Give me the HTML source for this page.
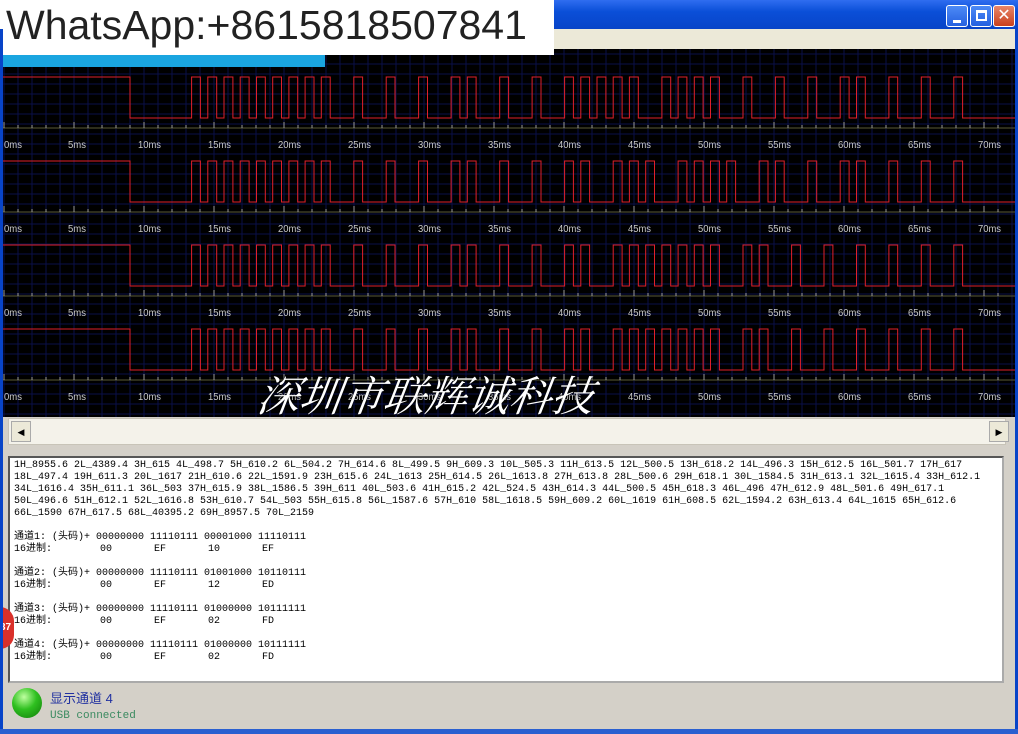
<!DOCTYPE html>
<html><head><meta charset="utf-8"><style>
*{margin:0;padding:0;box-sizing:border-box}
body{width:1018px;height:734px;overflow:hidden;background:#d4d0c8;position:relative;font-family:"Liberation Sans",sans-serif}
.abs{position:absolute}
#title{left:0;top:0;width:1018px;height:29px;background:linear-gradient(#2f6df0,#0a4fd8 40%,#0844c8)}
.btn{top:5px;width:22px;height:22px;border:1px solid #fff;border-radius:3px;background:linear-gradient(#4d8af6,#2561e0)}
#menu{left:0;top:29px;width:1018px;height:20px;background:#ece9d8}
#wave{left:0;top:49px;width:1018px;height:368px;background:#000}
#wa{left:0;top:0;width:554px;height:55px;background:#fff;font-size:41px;color:#222;padding:2px 0 0 6px}
#cyan{left:0;top:55px;width:325px;height:12px;background:#1aa5e0}
#sb{left:8px;top:418px;width:998px;height:27px;background:#f4f2ea;border:1px solid #c8c4b8}
.arr{top:2px;width:20px;height:21px;background:#ece9d8;border:1px solid #aaa;font-size:9px;text-align:center;line-height:20px;color:#000}
#txt{left:8px;top:456px;width:996px;height:227px;background:#fff;border:2px inset #aaa;font-family:"Liberation Mono","Noto Sans CJK SC",monospace;font-size:10px;line-height:12px;color:#000;padding:2px 0 0 4px;white-space:pre}
#ovl{left:258px;top:364px;font-family:"Liberation Serif","Noto Serif CJK SC",serif;font-style:italic;font-size:42px;color:#fff;text-shadow:0 0 2px #000;transform:skewX(-8deg)}
</style></head><body>
<div id="title" class="abs"></div>
<div class="abs btn" style="left:946px"><div class="abs" style="left:6px;top:14px;width:8px;height:3px;background:#fff"></div></div>
<div class="abs btn" style="left:970px"><div class="abs" style="left:5px;top:4px;width:11px;height:11px;border:2px solid #fff;border-top-width:3px"></div></div>
<div class="abs btn" style="left:993px;background:linear-gradient(#e8866a,#c9401c);color:#fff;font-size:16px;text-align:center;line-height:20px">✕</div>
<div id="menu" class="abs"></div>
<div id="wave" class="abs"><svg id="sv" width="1018" height="368"></svg></div>
<div id="wa" class="abs">WhatsApp:+8615818507841</div>
<div id="cyan" class="abs"></div>
<div id="ovl" class="abs">深圳市联辉诚科技</div>
<div id="sb" class="abs"><div class="abs arr" style="left:2px">◀</div><div class="abs arr" style="left:980px">▶</div></div>
<div id="txt" class="abs">1H_8955.6 2L_4389.4 3H_615 4L_498.7 5H_610.2 6L_504.2 7H_614.6 8L_499.5 9H_609.3 10L_505.3 11H_613.5 12L_500.5 13H_618.2 14L_496.3 15H_612.5 16L_501.7 17H_617
18L_497.4 19H_611.3 20L_1617 21H_610.6 22L_1591.9 23H_615.6 24L_1613 25H_614.5 26L_1613.8 27H_613.8 28L_500.6 29H_618.1 30L_1584.5 31H_613.1 32L_1615.4 33H_612.1
34L_1616.4 35H_611.1 36L_503 37H_615.9 38L_1586.5 39H_611 40L_503.6 41H_615.2 42L_524.5 43H_614.3 44L_500.5 45H_618.3 46L_496 47H_612.9 48L_501.6 49H_617.1
50L_496.6 51H_612.1 52L_1616.8 53H_610.7 54L_503 55H_615.8 56L_1587.6 57H_610 58L_1618.5 59H_609.2 60L_1619 61H_608.5 62L_1594.2 63H_613.4 64L_1615 65H_612.6
66L_1590 67H_617.5 68L_40395.2 69H_8957.5 70L_2159

通道1: (头码)+ 00000000 11110111 00001000 11110111
16进制:        00       EF       10       EF

通道2: (头码)+ 00000000 11110111 01001000 10110111
16进制:        00       EF       12       ED

通道3: (头码)+ 00000000 11110111 01000000 10111111
16进制:        00       EF       02       FD

通道4: (头码)+ 00000000 11110111 01000000 10111111
16进制:        00       EF       02       FD</div>
<div class="abs" style="left:0;top:607px;width:14px;height:42px;border-radius:0 21px 21px 0;background:#d9302a;color:#fff;font-size:10px;font-weight:bold;line-height:42px">37</div>
<div class="abs" style="left:12px;top:688px;width:30px;height:30px;border-radius:50%;background:radial-gradient(circle at 40% 30%,#bfffa0,#2fc020 45%,#107a08)"></div>
<div class="abs" style="left:50px;top:688px;font-family:'Liberation Sans','Noto Sans CJK SC',sans-serif;font-size:13px;color:#2030a0">显示通道 4</div>
<div class="abs" style="left:50px;top:710px;font-family:'Liberation Mono',monospace;font-size:11px;color:#3a8a60">USB connected</div>
<div class="abs" style="left:0;top:729px;width:1018px;height:5px;background:#2a5fd0"></div>
<div class="abs" style="left:0;top:29px;width:3px;height:700px;background:#0844c8"></div>
<div class="abs" style="left:1015px;top:29px;width:3px;height:700px;background:#0844c8"></div>
<script>
(function(){
var s='',W=1018;
for(var x=4;x<W;x+=14)s+='<line x1="'+x+'" y1="0" x2="'+x+'" y2="368" stroke="#0a1048" stroke-width="1"/>';
for(var y=5;y<368;y+=10)s+='<line x1="0" y1="'+y+'" x2="'+W+'" y2="'+y+'" stroke="#0a1048" stroke-width="1"/>';
var bits=['00000000111101110000100011110111','00000000111101110100100010110111','00000000111101110100000010111111','00000000111101110100000010111111'];
function X(t){return 4+14*t}
var f=1.053;
for(var c=0;c<4;c++){
 var ty=28+84*c,hi=ty,lo=ty+41,ax=ty+51;
 var t=0,p=[[0,hi]];
 var seg=function(level,d){var yy=level?hi:lo;p.push([X(t),yy]);t+=d;p.push([X(t),yy]);};
 seg(1,9);seg(0,4.4);
 for(var i=0;i<32;i++){seg(1,0.6*f);seg(0,(bits[c][i]=='1'?1.6:0.5)*f);}
 seg(1,0.6*f);p.push([X(t),lo]);p.push([W,lo]);
 s+='<polyline fill="none" stroke="#e0202a" stroke-width="1" points="'+p.map(function(q){return q[0].toFixed(1)+','+q[1]}).join(' ')+'"/>';
 s+='<line x1="0" y1="'+ax+'" x2="'+W+'" y2="'+ax+'" stroke="#5a5a38"/>';
 for(var k=0;k<=71;k++){var xx=X(k);s+='<line x1="'+xx+'" y1="'+(ax-(k%5?3:6))+'" x2="'+xx+'" y2="'+ax+'" stroke="#999"/>';}
 for(var m=0;m<=70;m+=5)s+='<text x="'+(X(m)+(m?-6:0))+'" y="'+(ax+20)+'" fill="#c8c8c8" font-size="10" font-family="Liberation Sans,sans-serif" textLength="'+(m<10?18:23)+'" lengthAdjust="spacingAndGlyphs">'+m+'ms</text>';
}
document.getElementById('sv').innerHTML=s;
})();
</script>
</body></html>
